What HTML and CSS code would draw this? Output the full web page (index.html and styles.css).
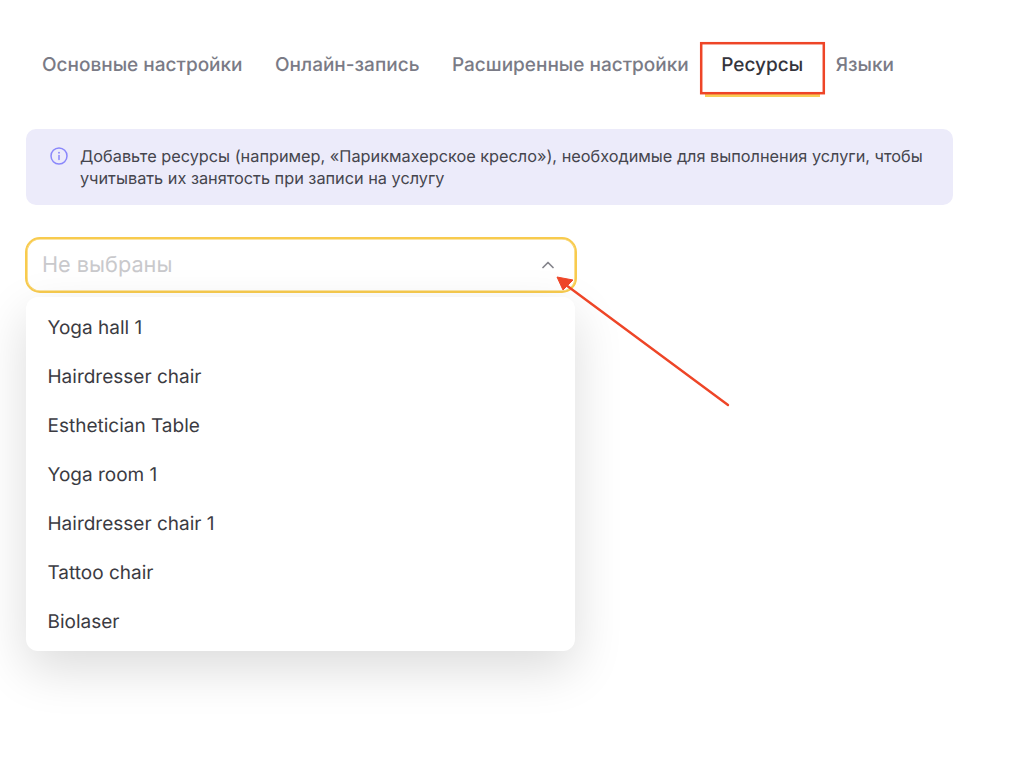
FILE: index.html
```html
<!DOCTYPE html>
<html lang="ru">
<head>
<meta charset="utf-8">
<title>Ресурсы</title>
<link rel="stylesheet" href="styles.css">
</head>
<body>
<main class="page">
  <nav class="tabs">
    <a class="tab">Основные настройки</a>
    <a class="tab">Онлайн-запись</a>
    <a class="tab">Расширенные настройки</a>
    <a class="tab tab-active">Ресурсы</a>
    <a class="tab">Языки</a>
  </nav>
  <div class="alert">
    <svg class="alert-icon" viewBox="0 0 18 18" width="18" height="18" fill="none" stroke="#8a87fb" stroke-width="1.5" stroke-linecap="round">
      <circle cx="9" cy="9" r="8"/>
      <path d="M9 8.4v4.2"/>
      <path d="M9 5.6v.2" stroke-width="1.8"/>
    </svg>
    <p class="alert-text">Добавьте ресурсы (например, «Парикмахерское кресло»), необходимые для выполнения услуги, чтобы учитывать их занятость при записи на услугу</p>
  </div>
  <div class="select">
    <span class="select-placeholder">Не выбраны</span>
    <svg class="select-chevron" viewBox="0 0 12 8" width="12" height="8" fill="none" stroke="#85858c" stroke-width="1.7" stroke-linecap="round" stroke-linejoin="round">
      <path d="M1 6.5 6 1.5l5 5"/>
    </svg>
  </div>
  <ul class="menu">
    <li class="menu-item">Yoga hall 1</li>
    <li class="menu-item">Hairdresser chair</li>
    <li class="menu-item">Esthetician Table</li>
    <li class="menu-item">Yoga room 1</li>
    <li class="menu-item">Hairdresser chair 1</li>
    <li class="menu-item">Tattoo chair</li>
    <li class="menu-item">Biolaser</li>
  </ul>
</main>
<svg class="callout-arrow" viewBox="0 0 1024 768" width="1024" height="768" fill="none">
  <rect x="701.2" y="43.2" width="122.6" height="50" stroke="#ee4527" stroke-width="2.5"/>
  <path d="M728 405 566 285" stroke="#ee4527" stroke-width="2.4" stroke-linecap="round"/>
  <path d="M557 277 573 280 563 290Z" fill="#ee4527" stroke="#ee4527" stroke-width="1" stroke-linejoin="round"/>
</svg>
</body>
</html>
```

FILE: styles.css
```css
* { box-sizing: border-box; }
html, body { margin: 0; height: 100%; background: #fff; overflow: hidden; }
body { font-family: Inter, "Liberation Sans", sans-serif; text-rendering: geometricPrecision; position: relative; width: 1024px; height: 768px; }
.page { padding: 42px 0 0 26px; width: 953px; }
.tabs { display: flex; height: 55px; }
.tab { padding: 11px 16.5px 0 16px; font-size: 19px; line-height: 24px; font-weight: 500; color: #7a7b86; white-space: nowrap; height: 55px; }
.tab-active { color: #34343c; border-bottom: 3px solid #f8cd55; }
.alert { margin-top: 32px; height: 76px; background: #ecebfa; border-radius: 10px; padding: 8px 24px 8px 23.5px; display: flex; gap: 12.5px; align-items: flex-start; }
.alert-icon { flex: none; margin-top: 10px; }
.alert-text { margin: 8px 0 0; font-size: 16.3px; line-height: 22px; color: #45454d; }
.select { margin: 32px 0 0 -1px; width: 552px; height: 56px; border: 2px solid #f8cb4e; box-shadow: inset 0 0 0 .6px #f8cb4e; border-radius: 15px; display: flex; align-items: center; justify-content: space-between; padding: 0 21px 0 15px; background: #fff; }
.select-placeholder { font-size: 21.7px; color: #c9c9cc; }
.select-chevron { flex: none; }
.menu { position: relative; list-style: none; margin: 4px 0 0; padding: 6px 0 5px; width: 549px; background: #fff; border-radius: 12px; box-shadow: 0 18px 50px rgba(0,0,0,.14); }
.menu-item { height: 49px; line-height: 49px; padding-left: 21.5px; font-size: 19px; color: #3b3b42; }
.callout-arrow { position: absolute; left: 0; top: 0; pointer-events: none; }
```
